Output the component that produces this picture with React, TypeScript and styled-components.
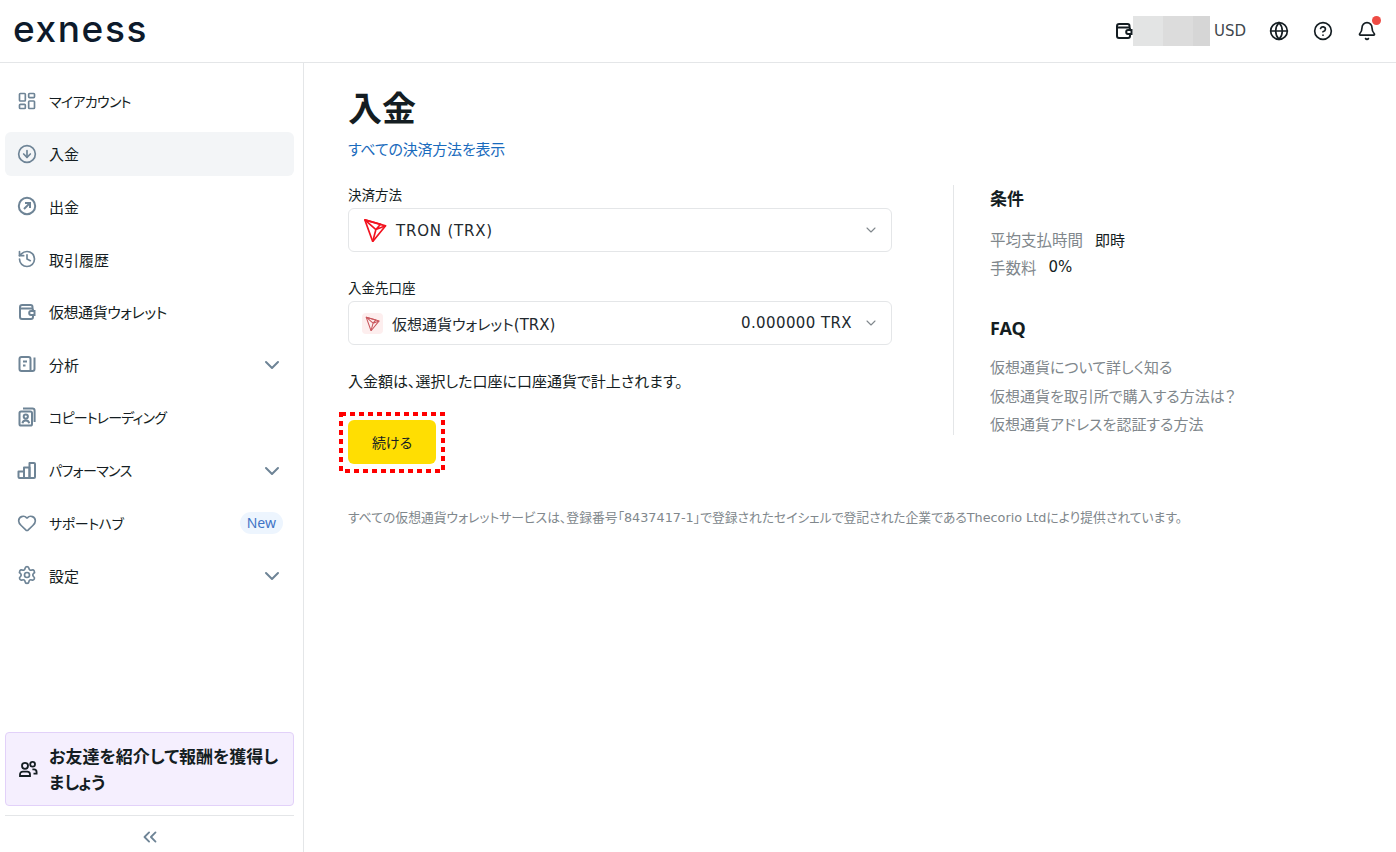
import React from 'react'
import styled, {createGlobalStyle} from "styled-components";
import {
    ChevronDown,
    ChevronsLeft,
    CircleArrowDown,
    CircleHelp,
    Globe,
    Heart,
    History,
    LayoutDashboard,
    Settings,
    Bell,
} from "lucide-react";

const GlobalStyle = createGlobalStyle`
  * {
    box-sizing: border-box;
  }

  html, body {
    margin: 0;
    height: 100%;
    background: #fff;
    color: #141d22;
    font-family: "DejaVu Sans", "Noto Sans CJK JP", sans-serif;
    font-feature-settings: "palt";
    font-size: 15px;
  }
`

const WalletIcon = ({size = 20}: { size?: number }) => (
    <svg width={size} height={size} viewBox="0 0 20 20" fill="none" stroke="currentColor" strokeWidth="2">
        <path d="M3 6.5V5.2C3 4 4 3 5.2 3H13.5C14.6 3 15.5 3.9 15.5 5V6.5"/>
        <path d="M3 5.5V15C3 16.1 3.9 17 5 17H14C15.1 17 16 16.1 16 15V13"/>
        <path d="M3.5 6.5H14.5C15.4 6.5 16 7.1 16 8V9"/>
        <path d="M17.5 9H14C13 9 12.2 9.9 12.2 11S13 13 14 13H17.5V9Z"/>
    </svg>
)

const WithdrawIcon = () => (
    <svg width="20" height="20" viewBox="0 0 20 20" fill="none" stroke="currentColor" strokeWidth="2">
        <circle cx="10" cy="10" r="8.2"/>
        <path d="M7 13L12.6 7.4M8 7H13V12"/>
    </svg>
)

const AnalyticsIcon = () => (
    <svg width="20" height="20" viewBox="0 0 20 20" fill="none" stroke="currentColor" strokeWidth="2">
        <path d="M13.5 17H4.5C3.4 17 2.5 16.1 2.5 15V5C2.5 3.9 3.4 3 4.5 3H11.5C12.6 3 13.5 3.9 13.5 5V17ZM13.5 17H15.5C16.6 17 17.5 16.1 17.5 15V3.5"/>
        <path d="M6 7.5H10M6 11.5H8.5"/>
    </svg>
)

const CopyTradeIcon = () => (
    <svg width="20" height="20" viewBox="0 0 20 20" fill="none" stroke="currentColor" strokeWidth="2">
        <rect x="2.5" y="4.5" width="12.5" height="14" rx="1.6"/>
        <path d="M6 1.6H15.5C16.7 1.6 17.6 2.5 17.6 3.7V15"/>
        <circle cx="8.8" cy="9.6" r="2.1"/>
        <path d="M5.4 16.2C5.8 14.4 7 13.6 8.8 13.6S11.8 14.4 12.2 16.2"/>
    </svg>
)

const BarsIcon = () => (
    <svg width="20" height="20" viewBox="0 0 20 20" fill="none" stroke="currentColor" strokeWidth="2" strokeLinejoin="round">
        <path d="M1.5 11.5H7V18H2.5C1.9 18 1.5 17.6 1.5 17V11.5Z"/>
        <path d="M7 7.5H12.5V18H7V7.5Z"/>
        <path d="M12.5 3H17C17.6 3 18 3.4 18 4V17C18 17.6 17.6 18 17 18H12.5V3Z"/>
    </svg>
)

const FriendsIcon = () => (
    <svg width="20" height="20" viewBox="0 0 20 20" fill="none" stroke="currentColor" strokeWidth="1.8">
        <circle cx="7" cy="6.8" r="3"/>
        <path d="M2 17V15.4C2 13.8 3.2 12.6 4.8 12.6H9.2C10.8 12.6 12 13.8 12 15.4V17H2Z"/>
        <circle cx="14.6" cy="5.2" r="2.4"/>
        <path d="M14.4 10.4H16C17.6 10.4 18.6 11.6 18.6 13.2V14.6H15.5"/>
    </svg>
)

const TronIcon = ({size, color}: { size: number, color: string }) => (
    <svg width={size} height={size} viewBox="0 0 26 26" fill="none" stroke={color} strokeWidth="1.8" strokeLinejoin="round">
        <path d="M2 2L24.5 8.5L10.5 25.5L2 2Z"/>
        <path d="M2 2L14 12.5L10.5 25.5M14 12.5L24.5 8.5M2 2L19 6.8L14 12.5"/>
    </svg>
)

const navItems = [
    {label: "マイアカウント", icon: <LayoutDashboard size={20} strokeWidth={2}/>, kana: -0.7},
    {label: "入金", icon: <CircleArrowDown size={20} strokeWidth={2}/>, active: true},
    {label: "出金", icon: <WithdrawIcon/>},
    {label: "取引履歴", icon: <History size={20} strokeWidth={2}/>},
    {label: "仮想通貨ウォレット", icon: <WalletIcon/>, tracking: -0.45},
    {label: "分析", icon: <AnalyticsIcon/>, expandable: true},
    {label: "コピートレーディング", icon: <CopyTradeIcon/>, kana: -0.8},
    {label: "パフォーマンス", icon: <BarsIcon/>, expandable: true, kana: -0.6},
    {label: "サポートハブ", icon: <Heart size={20} strokeWidth={2}/>, badge: "New", kana: -0.4},
    {label: "設定", icon: <Settings size={20} strokeWidth={2}/>, expandable: true},
]

export default function App() {
    return (
        <Root>
            <GlobalStyle/>
            <Header>
                <Logo>exness</Logo>
                <HeaderActions>
                    <Balance>
                        <WalletIcon size={20}/>
                        <Mask>
                            <MaskPart $width={30} $color="#e3e4e4"/>
                            <MaskPart $width={30} $color="#dcdcdc"/>
                            <MaskPart $width={17} $color="#d6d6d6"/>
                        </Mask>
                        <Currency>USD</Currency>
                    </Balance>
                    <HeaderIcon><Globe size={20} strokeWidth={2}/></HeaderIcon>
                    <HeaderIcon><CircleHelp size={20} strokeWidth={2}/></HeaderIcon>
                    <HeaderIcon>
                        <Bell size={20} strokeWidth={2}/>
                        <Dot/>
                    </HeaderIcon>
                </HeaderActions>
            </Header>

            <Body>
                <Sidebar>
                    <Nav>
                        {navItems.map(item => (
                            <NavItem key={item.label} $active={item.active}>
                                <NavIcon>{item.icon}</NavIcon>
                                <NavLabel $kana={item.kana} $tracking={item.tracking}>{item.label}</NavLabel>
                                {item.expandable && <NavChevron><ChevronDown size={24} strokeWidth={2}/></NavChevron>}
                                {item.badge && <Badge>{item.badge}</Badge>}
                            </NavItem>
                        ))}
                    </Nav>
                    <Referral>
                        <FriendsIcon/>
                        <ReferralText>お友達を紹介して報酬を獲得しましょう</ReferralText>
                    </Referral>
                    <Collapse>
                        <ChevronsLeft size={22} strokeWidth={2}/>
                    </Collapse>
                </Sidebar>

                <Main>
                    <Title>入金</Title>
                    <AllMethods>すべての決済方法を表示</AllMethods>
                    <Columns>
                        <Form>
                            <Field>
                                <Label>決済方法</Label>
                                <Select>
                                    <TronIcon size={24} color="#f2131f"/>
                                    <SelectText $large>TRON (TRX)</SelectText>
                                    <SelectChevron><ChevronDown size={16} strokeWidth={1.6}/></SelectChevron>
                                </Select>
                            </Field>
                            <Field>
                                <Label>入金先口座</Label>
                                <Select>
                                    <AccountIcon><TronIcon size={15} color="#c9575d"/></AccountIcon>
                                    <SelectText>仮想通貨ウォレット(TRX)</SelectText>
                                    <Amount>0.000000 TRX</Amount>
                                    <SelectChevron><ChevronDown size={16} strokeWidth={1.6}/></SelectChevron>
                                </Select>
                            </Field>
                            <Note>入金額は、選択した口座に口座通貨で計上されます。</Note>
                            <Continue>
                                続ける
                                <Highlight width="106" height="61" viewBox="0 0 106 61" fill="none">
                                    <rect x="2" y="2" width="102" height="57" stroke="#ff0000" strokeWidth="4" strokeDasharray="5 4"/>
                                </Highlight>
                            </Continue>
                        </Form>
                        <Aside>
                            <AsideTitle>条件</AsideTitle>
                            <Term><TermName>平均支払時間</TermName><span>即時</span></Term>
                            <Term><TermName>手数料</TermName><span>0%</span></Term>
                            <FaqTitle>FAQ</FaqTitle>
                            <FaqLink>仮想通貨について詳しく知る</FaqLink>
                            <FaqLink>仮想通貨を取引所で購入する方法は？</FaqLink>
                            <FaqLink>仮想通貨アドレスを認証する方法</FaqLink>
                        </Aside>
                    </Columns>
                    <Disclaimer>
                        すべての仮想通貨ウォレットサービスは、登録番号「8437417-1」で登録されたセイシェルで登記された企業であるThecorio Ltdにより提供されています。
                    </Disclaimer>
                </Main>
            </Body>
        </Root>
    );
}

const Root = styled.div`
  display: flex;
  flex-direction: column;
  height: 100vh;
  overflow: hidden;
`
const Header = styled.header`
  display: flex;
  align-items: center;
  justify-content: space-between;
  flex: 0 0 63px;
  padding: 0 19px 0 13px;
  border-bottom: 1px solid #e4e6e8;
`
const Logo = styled.div`
  font-family: Inter, sans-serif;
  font-size: 37px;
  font-weight: 500;
  line-height: 1;
  letter-spacing: 1.6px;
  color: #0d1a2b;
  margin-top: -5px;
`
const HeaderActions = styled.div`
  display: flex;
  align-items: center;
  gap: 24px;
  color: #141d22;
`
const Balance = styled.div`
  display: flex;
  align-items: center;
  margin-right: -1px;
`
const Mask = styled.div`
  display: flex;
  height: 30px;
  margin-left: -1px;
`
const MaskPart = styled.div<{ $width: number, $color: string }>`
  width: ${p => p.$width}px;
  background: ${p => p.$color};
`
const Currency = styled.span`
  margin-left: 4px;
  color: #3f474d;
  font-size: 15px;
`
const HeaderIcon = styled.div`
  position: relative;
  display: flex;
`
const Dot = styled.span`
  position: absolute;
  top: -5px;
  right: -4px;
  width: 9px;
  height: 9px;
  border-radius: 50%;
  background: #ee4b44;
`
const Body = styled.div`
  display: flex;
  flex: 1;
  min-height: 0;
`
const Sidebar = styled.aside`
  display: flex;
  flex-direction: column;
  flex: 0 0 304px;
  padding: 16px 9px 0 5px;
  border-right: 1px solid #e4e6e8;
`
const Nav = styled.nav`
  display: flex;
  flex-direction: column;
  gap: 8.7px;
  flex: 1;
`
const NavItem = styled.div<{ $active?: boolean }>`
  display: flex;
  align-items: center;
  height: 44px;
  padding: 0 10px 0 12px;
  border-radius: 6px;
  background: ${p => p.$active ? "#f3f5f7" : "transparent"};
  font-size: 15px;
`
const NavIcon = styled.span`
  display: flex;
  width: 20px;
  margin-right: 12px;
  color: #6e8496;
`
const NavLabel = styled.span<{ $kana?: number, $tracking?: number }>`
  font-size: ${p => p.$kana ? "14px" : "15px"};
  letter-spacing: ${p => p.$kana ?? p.$tracking ?? 0}px;
`
const NavChevron = styled.span`
  display: flex;
  margin-left: auto;
  margin-top: 2px;
  color: #6e8496;
`
const Badge = styled.span`
  margin-left: auto;
  margin-right: 1px;
  padding: 0 7px;
  height: 22px;
  line-height: 22px;
  border-radius: 11px;
  background: #edf5fe;
  color: #3f74c6;
  font-family: "Noto Sans", sans-serif;
  font-size: 14px;
`
const Referral = styled.div`
  display: flex;
  align-items: center;
  gap: 11px;
  height: 74px;
  padding: 0 12px;
  border: 1px solid #e2d1f9;
  border-radius: 4px;
  background: #f5effe;
  font-size: 17px;
  font-weight: 700;
  line-height: 26px;

  & > svg {
    flex: none;
  }
`
const ReferralText = styled.span`
  padding-top: 2px;
`
const Collapse = styled.div`
  display: flex;
  justify-content: center;
  align-items: center;
  height: 37px;
  margin-top: 9px;
  padding-top: 6px;
  border-top: 1px solid #e4e6e8;
  color: #6e8496;
`
const Main = styled.main`
  flex: 1;
  padding: 26px 44px 0;
`
const Title = styled.h1`
  margin: 0;
  font-size: 34px;
  font-weight: 700;
  line-height: 40px;
`
const AllMethods = styled.a`
  display: block;
  margin-top: 11px;
  color: #1a6bbd;
  font-size: 15px;
  line-height: 20px;
  letter-spacing: -0.2px;
`
const Columns = styled.div`
  display: flex;
  margin-top: 25px;
`
const Form = styled.div`
  display: flex;
  flex-direction: column;
  align-items: flex-start;
  width: 544px;
`
const Field = styled.div`
  width: 100%;
  margin-bottom: 26px;
`
const Label = styled.div`
  margin-bottom: 3px;
  font-size: 13.5px;
  line-height: 20px;
`
const Select = styled.div`
  display: flex;
  align-items: center;
  height: 44px;
  padding: 0 12px 0 14px;
  border: 1px solid #e4e6e8;
  border-radius: 6px;
`
const SelectText = styled.span<{ $large?: boolean }>`
  margin-left: 9px;
  padding-top: 1px;
  font-size: 15px;
  letter-spacing: ${p => p.$large ? "0.8px" : "0"};
  color: #22292e;
`
const SelectChevron = styled.span`
  display: flex;
  margin-left: auto;
  color: #80878c;
`
const AccountIcon = styled.span`
  display: flex;
  align-items: center;
  justify-content: center;
  width: 21px;
  height: 21px;
  margin-left: -1px;
  border-radius: 4px;
  background: #fdeeee;
`
const Amount = styled.span`
  margin-left: auto;
  margin-right: 11px;
  color: #22292e;
  font-size: 15px;
  letter-spacing: 0.4px;

  & + ${SelectChevron} {
    margin-left: 0;
  }
`
const Note = styled.p`
  margin: 1px 0 0;
  font-size: 15px;
  line-height: 20px;
`
const Continue = styled.button`
  position: relative;
  width: 88px;
  height: 44px;
  margin-top: 28px;
  border: none;
  border-radius: 6px;
  background: #ffde02;
  color: #141d22;
  font-family: inherit;
  font-feature-settings: inherit;
  font-size: 14px;
`
const Highlight = styled.svg`
  position: absolute;
  top: -8px;
  left: -9px;
`
const Aside = styled.div`
  display: flex;
  flex-direction: column;
  align-items: flex-start;
  height: 250px;
  margin-left: 61px;
  padding-left: 36px;
  border-left: 1px solid #e4e6e8;
`
const AsideTitle = styled.h3`
  flex: none;
  margin: 2px 0 14px;
  font-size: 17px;
  font-weight: 700;
  line-height: 24px;
`
const Term = styled.div`
  display: flex;
  flex: none;
  gap: 12px;
  height: 28px;
  align-items: center;
  font-size: 15px;
`
const TermName = styled.span`
  color: #80878c;
  font-size: 15.5px;
`
const FaqTitle = styled(AsideTitle)`
  margin: 35px 0 14px;
  font-family: "Noto Sans", sans-serif;
  font-size: 18px;
`
const FaqLink = styled.a`
  flex: none;
  height: 28.5px;
  line-height: 28.5px;
  color: #80878c;
  font-size: 15px;
`
const Disclaimer = styled.p`
  margin: 45px 0 0;
  color: #80878c;
  font-size: 12.8px;
  line-height: 18px;
`
